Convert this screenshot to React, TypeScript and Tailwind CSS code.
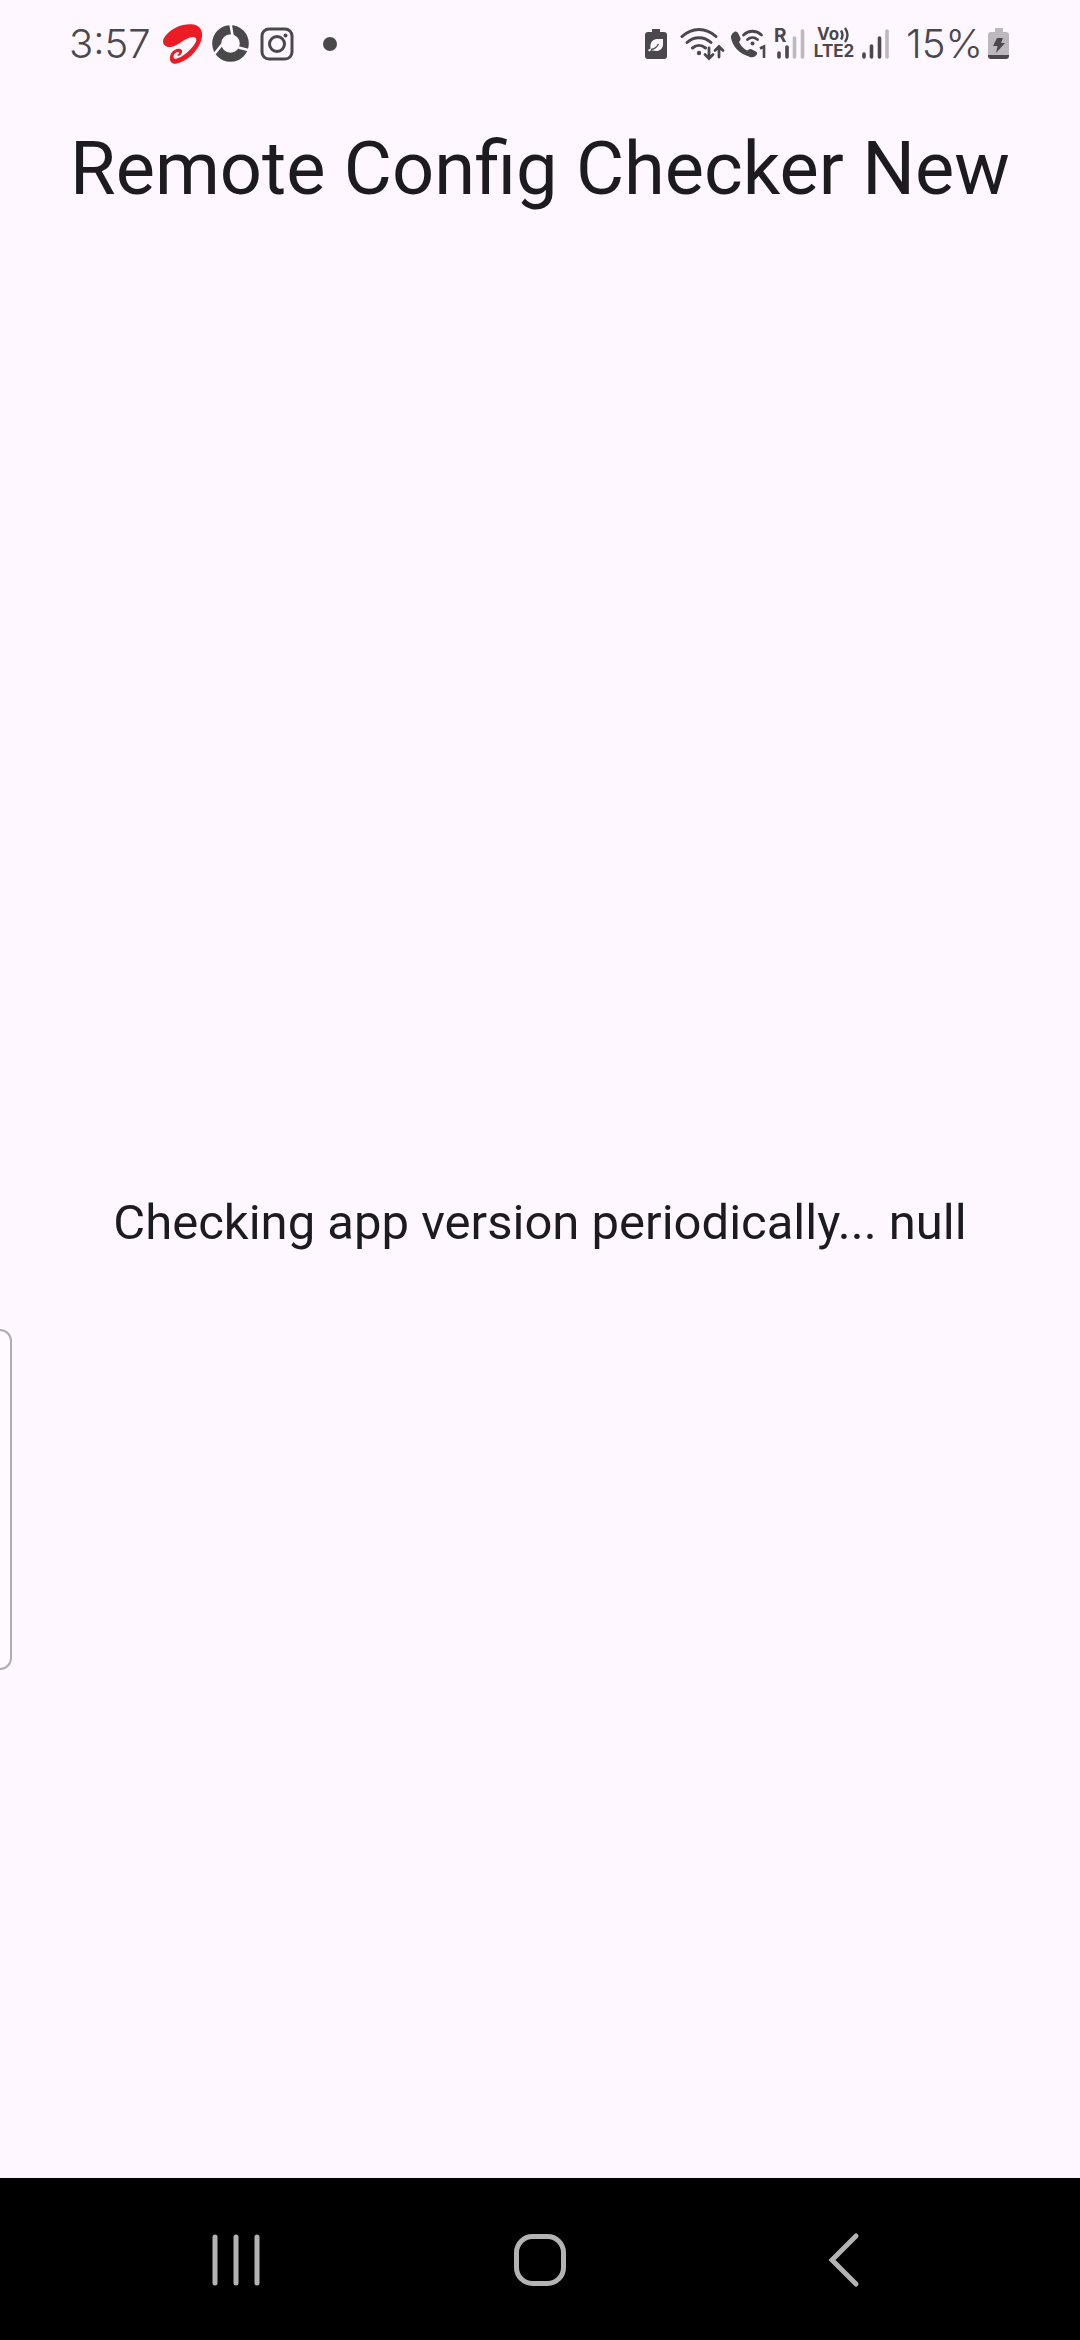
import React from "react";

const ink = "#4a484b";
const faded = "#bdb8be";
const surface = "#fef7ff";

function CarrierLogo() {
  return (
    <svg className="h-10 w-10" viewBox="0 0 40 40" aria-label="Carrier">
      <path
        fill="#ed1c24"
        d="M8 23C4 23.500 0 21.500 0 17.500C0 13 6 7 13 3.500C20 .2 29 -.7 34 1.700C38.500 4 39.800 8.500 38.800 14C37 24 27.500 34.500 17 38.600C14 40 10.500 40.300 8.500 38.500C6.300 36.500 6.500 32 8.500 28.800C10.500 25.600 14.500 23.800 17.500 25C20 26.200 19.500 29.500 17 31.200C15.700 32 14.500 31.800 13.800 31C15.500 30.600 16.500 29.200 15.700 28.300C14.500 27.200 11.800 28.800 10.800 31C10 33 10.800 35 13 34.800C19 34 30 24.500 33 17.500C34 14.800 32.800 12.800 29.500 13C22 13.500 15.500 22 8 23Z"
      />
    </svg>
  );
}

function RingIcon() {
  return (
    <svg className="h-10 w-10" viewBox="0 0 40 40" fill="none">
      <circle cx="19.500" cy="19.500" r="13.800" stroke={ink} strokeWidth="9" />
      <path
        d="M19.500 0 21.500 11.500M27.500 23.500 39 26.500M3 30.500 11 20.500"
        stroke={surface}
        strokeWidth="2.600"
      />
    </svg>
  );
}

function CameraIcon() {
  return (
    <svg className="h-9 w-9" viewBox="0 0 36 36" fill="none" stroke={ink} strokeWidth="3">
      <rect x="3" y="3" width="30" height="30" rx="7" />
      <circle cx="18" cy="18" r="7.500" />
      <circle cx="26.500" cy="9.500" r="2" fill={ink} stroke="none" />
    </svg>
  );
}

function LeafBattery() {
  return (
    <svg className="h-8 w-6" viewBox="0 0 24 32">
      <path fill={ink} d="M8 1h8v3h4a3 3 0 0 1 3 3v21a3 3 0 0 1-3 3H4a3 3 0 0 1-3-3V7a3 3 0 0 1 3-3h4z" />
      <path fill={surface} d="M19 11v5c0 4.500-3 7-7 7-2 0-3.500-.3-4.500-.9L5 23.500l-1-1.500 2.500-1.500C5.500 14.500 9 11 13 11z" />
      <path fill="none" stroke={ink} strokeWidth="1.400" d="M7 21.500c3-.5 6-2.500 7.500-5.500" />
    </svg>
  );
}

function WifiIcon() {
  return (
    <svg className="h-9 w-[46px]" viewBox="1 0 46 36" fill="none" stroke={ink} strokeWidth="3" strokeLinecap="round">
      <path d="M3 10.500C13 1 27 1 37 10.500" />
      <path d="M8 16.500c7-6.500 17-6.500 24 0" />
      <path d="M13.500 22c4-3.500 9-3.500 13 0" />
      <circle cx="20" cy="27" r="2.200" fill={ink} stroke="none" />
      <path d="M30 22v10M26 28.500l4 4 4-4M40 31V21M36 24.500l4-4 4 4" strokeWidth="2.800" />
    </svg>
  );
}

function WifiCallIcon() {
  return (
    <svg className="h-9 w-9" viewBox="0 0 36 36">
      <path
        fill={ink}
        d="M1 10Q2 6.500 5 5.500 7 5 8 7l2.500 5q.7 2-1.500 4 3 6 8 8.500 2.500-2 4-1.500l5 2.500q2 1.500.5 3.500-2.500 3-6.500 2Q4 26 1 12Z"
      />
      <g fill="none" stroke={ink} strokeWidth="2.800" strokeLinecap="round">
        <path d="M13.500 9c5.500-5 12.500-5 18 0" />
        <path d="M17.500 13.500c3-2.500 7-2.500 10 0" />
      </g>
      <circle cx="22.500" cy="17.500" r="2" fill={ink} />
      <path fill="none" stroke={ink} strokeWidth="2.600" d="M30 22.500 34 20.500V32" />
    </svg>
  );
}

function RoamingSignal() {
  return (
    <div className="relative h-9 w-8">
      <svg className="h-9 w-8" viewBox="0 0 32 36" strokeWidth="3.600" strokeLinecap="round" stroke={ink}>
        <path d="M5 27v4M13 21v10" />
        <path stroke={faded} d="M20.500 12v19M28.500 5v26" />
      </svg>
      <span className="absolute top-0 left-0 text-[19px] leading-5 font-bold">R</span>
    </div>
  );
}

function VolteIcon() {
  return (
    <div className="flex h-9 w-10 flex-col items-center text-[17px] leading-[17px] font-bold">
      <span className="flex items-center">
        Vo
        <svg className="h-4 w-3" viewBox="0 0 12 16" fill="none" stroke={ink} strokeWidth="2.400">
          <path d="M2 3.500q3 4.500 0 9M6 1q5 7 0 14" />
        </svg>
      </span>
      <span>LTE2</span>
    </div>
  );
}

function SignalIcon() {
  return (
    <svg className="h-9 w-7" viewBox="0 0 28 36" strokeWidth="3.600" strokeLinecap="round" stroke={ink}>
      <path d="M2 28v3M9.500 20v11M17.500 12v19" />
      <path stroke={faded} d="M25 5v26" />
    </svg>
  );
}

function ChargeBattery() {
  return (
    <svg className="h-8 w-6" viewBox="0 0 24 32">
      <path fill={faded} d="M8 0h8v4h3a3 3 0 0 1 3 3v20H1V7a3 3 0 0 1 3-3h4z" />
      <path fill={ink} d="M1 27h21v1a3 3 0 0 1-3 3H4a3 3 0 0 1-3-3zM10 10h6l-2 5h4L9 25l1.500-7H6z" />
    </svg>
  );
}

export default function App() {
  return (
    <div className="flex min-h-screen flex-col bg-[#fef7ff] text-[#1d1b20]">
      <div className="flex h-[88px] items-center justify-between px-[69px] text-[40px] leading-none font-light text-[#4a484b] font-['Inter',sans-serif]">
        <div className="flex items-center">
          <time>3:57</time>
          <div className="ml-3 flex items-center gap-2">
            <CarrierLogo />
            <RingIcon />
            <CameraIcon />
          </div>
          <span className="ml-7 size-3.5 rounded-full bg-[#4a484b]" />
        </div>
        <div className="flex items-center">
          <div className="mr-4 flex items-center gap-2">
            <div className="flex items-center gap-1">
              <div className="flex items-center gap-3">
                <LeafBattery />
                <WifiIcon />
              </div>
              <WifiCallIcon />
            </div>
            <RoamingSignal />
            <VolteIcon />
            <SignalIcon />
          </div>
          <span className="mr-1">15%</span>
          <ChargeBattery />
        </div>
      </div>

      <header className="flex h-[180px] justify-center pt-11">
        <h1 className="text-[74px] leading-none whitespace-nowrap font-['Roboto',sans-serif]">
          Remote Config Checker New
        </h1>
      </header>

      <main className="relative flex flex-1 items-center justify-center">
        <p className="text-[49px] whitespace-nowrap font-['Roboto',sans-serif]">
          Checking app version periodically... null
        </p>
        <div className="absolute top-[1061px] left-0 h-[341px] w-3 rounded-r-xl border-2 border-l-0 border-[#b0acb1] bg-[#fffaff]" />
      </main>

      <nav className="flex h-[162px] items-center justify-around bg-black px-[84px] pt-0.5" aria-label="System navigation">
        <button className="size-16" aria-label="Recent apps">
          <svg viewBox="0 0 64 64" stroke="#b3b3b3" strokeWidth="5" strokeLinecap="round">
            <path d="M11 9v46M32 9v46M53 9v46" />
          </svg>
        </button>
        <button className="size-16" aria-label="Home">
          <svg viewBox="0 0 64 64" fill="none" stroke="#b3b3b3" strokeWidth="5">
            <rect x="8.500" y="8.500" width="47" height="47" rx="16" />
          </svg>
        </button>
        <button className="size-16" aria-label="Back">
          <svg viewBox="0 0 64 64" fill="none" stroke="#b3b3b3" strokeWidth="5" strokeLinecap="round">
            <path d="M44 8 20 32l24 24" />
          </svg>
        </button>
      </nav>
    </div>
  );
}
